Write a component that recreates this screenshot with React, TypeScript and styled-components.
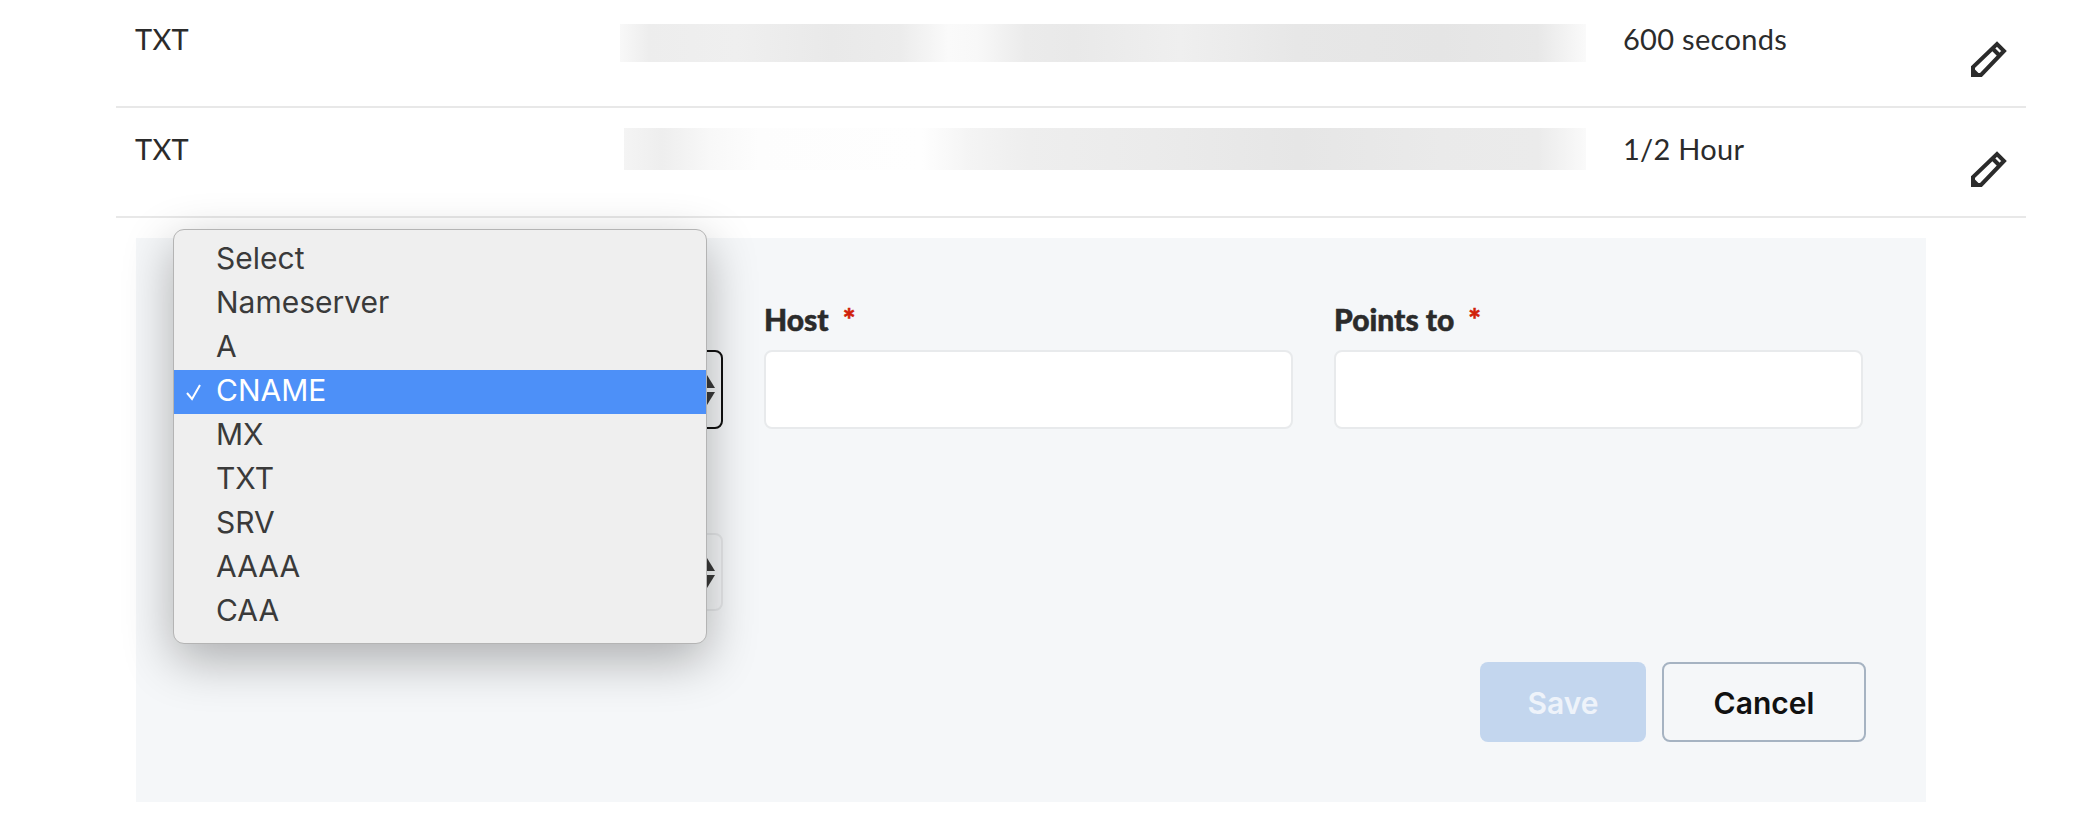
import React from "react";
import styled, {createGlobalStyle} from "styled-components";

const GlobalStyle = createGlobalStyle`
    html, body {
        margin: 0;
        background: #fff;
    }
    body {
        font-family: Lato, "Noto Sans", sans-serif;
        color: #2b2b2b;
    }
`;

const Page = styled.div`
    position: relative;
    width: 2094px;
    height: 830px;
    overflow: hidden;
`;

const RecordList = styled.div`
    margin: 0 68px 0 116px;
`;

const RecordRow = styled.div<{nudge: number}>`
    display: grid;
    grid-template-columns: 485px 966px 360px 1fr;
    box-sizing: border-box;
    height: ${({nudge}) => nudge ? 110 : 108}px;
    padding-left: 19px;
    border-bottom: 2px solid #e8e8e8;
    font-size: 29px;
    letter-spacing: 0.3px;
    line-height: 34px;
    --nudge: ${({nudge}) => nudge}px;
`;

const Cell = styled.div`
    padding-top: calc(22px + var(--nudge));
`;

const TtlCell = styled(Cell)`
    padding-left: 37px;
`;

const BlurClip = styled.div<{top: number; left: number; height: number}>`
    margin-top: ${({top}) => top}px;
    margin-left: ${({left}) => left}px;
    height: ${({height}) => height}px;
    overflow: hidden;
    background: #fafafa;
`;

const BlurStrip = styled.div<{stops: string}>`
    height: 100%;
    background: linear-gradient(90deg, ${({stops}) => stops});
`;

const EditCell = styled.div`
    padding: calc(40px + var(--nudge)) 0 0 24px;
    color: #2b2b2b;
`;

const Panel = styled.div`
    margin: 20px 0 0 136px;
    width: 1790px;
    height: 564px;
    box-sizing: border-box;
    padding: 65px 60px 0 58px;
    background: #f5f7f9;
`;

const FieldGrid = styled.div`
    display: grid;
    grid-template-columns: repeat(3, 529px);
    column-gap: 41px;
`;

const Field = styled.div``;

const Label = styled.div`
    height: 47px;
    font-size: 30px;
    font-weight: 900;
    line-height: 32px;
    color: #2b2b2b;
    -webkit-text-stroke: 0.5px #2b2b2b;
`;

const Star = styled.span`
    margin-left: 14px;
    color: #d0200a;
    -webkit-text-stroke: 0.5px #d0200a;
`;

const TextBox = styled.div`
    height: 79px;
    box-sizing: border-box;
    background: #fff;
    border: 2px solid #e8eaec;
    border-radius: 8px;
`;

const SelectBox = styled.div<{focused?: boolean}>`
    position: relative;
    width: 529px;
    height: ${({focused}) => focused ? 79 : 78}px;
    box-sizing: border-box;
    border: 2px solid ${({focused}) => focused ? "#111" : "#e6e8ea"};
    border-radius: 8px;
    background: #f5f7f9;
`;

const SelectArrows = styled.svg`
    position: absolute;
    right: 6px;
    top: 23px;
`;

const SecondSelect = styled.div`
    margin-top: 104px;
`;

const Actions = styled.div`
    display: flex;
    justify-content: flex-end;
    gap: 16px;
    margin-top: 51px;
`;

const Button = styled.button<{primary?: boolean}>`
    height: 80px;
    width: ${({primary}) => primary ? 166 : 204}px;
    box-sizing: border-box;
    border-radius: 8px;
    border: ${({primary}) => primary ? "none" : "2px solid #a6b3c2"};
    background: ${({primary}) => primary ? "#c3d6ee" : "#f5f7f9"};
    color: ${({primary}) => primary ? "#eef3fa" : "#111"};
    font-family: Inter, sans-serif;
    font-size: 30px;
    font-weight: 600;
    padding: 2px 0 0;
`;

const Dropdown = styled.div`
    position: absolute;
    left: 173px;
    top: 229px;
    width: 534px;
    height: 415px;
    box-sizing: border-box;
    padding: 8px 0;
    background: #efefef;
    border: 1px solid #b4b4b4;
    border-radius: 11px;
    box-shadow: 0 16px 50px rgba(0, 0, 0, 0.3);
    font-family: Inter, sans-serif;
    font-size: 30px;
    overflow: hidden;
`;

const Option = styled.div<{selected?: boolean}>`
    position: relative;
    height: 44px;
    line-height: 40px;
    padding-left: 42px;
    color: ${({selected}) => selected ? "#fff" : "#3a3a3a"};
    background: ${({selected}) => selected ? "#4d90f8" : "transparent"};
`;

const Check = styled.svg`
    position: absolute;
    left: 11px;
    top: 13px;
`;

const Pencil = () => (
    <svg width="38" height="38" viewBox="0 0 38 38" fill="none" stroke="currentColor" strokeWidth="4">
        <path d="M3 35V27L27 4L34 11L11 35Z" strokeLinejoin="miter"/>
        <path d="M22.5 8.5L29.5 15.5"/>
        <path d="M3 35L3 29L9 35Z" fill="currentColor" strokeWidth="2"/>
    </svg>
);

const Arrows = () => (
    <SelectArrows width="16" height="30" viewBox="0 0 16 30" fill="#3a3a3a">
        <path d="M8 0L16 13H0Z"/>
        <path d="M0 17H16L8 30Z"/>
    </SelectArrows>
);

const records = [
    {
        type: "TXT", ttl: "600 seconds", nudge: 0, top: 24, left: 0, blurHeight: 38,
        stops: "#f8f8f8 0%, #ededed 3%, #efefef 12%, #e9e9e9 22%, #ececec 29%, #fafafa 34%, #f8f8f8 37%, #ebebeb 42%, #e9e9e9 47%, #efefef 58%, #e7e7e7 70%, #e5e5e5 85%, #e8e8e8 95%, #fafafa 100%",
    },
    {
        type: "TXT", ttl: "1/2 Hour", nudge: 2, top: 20, left: 4, blurHeight: 42,
        stops: "#f4f4f4 0%, #eeeeee 4%, #f8f8f8 9%, #fdfdfd 14%, #fefefe 31%, #f4f4f4 36%, #eeeeee 42%, #ebebeb 55%, #e6e6e6 70%, #eaeaea 85%, #ebebeb 95%, #fafafa 100%",
    },
];

const options = ["Select", "Nameserver", "A", "CNAME", "MX", "TXT", "SRV", "AAAA", "CAA"];

const App = () => (
    <Page>
        <GlobalStyle/>
        <RecordList>
            {records.map((record, index) => (
                <RecordRow key={index} nudge={record.nudge}>
                    <Cell>{record.type}</Cell>
                    <div>
                        <BlurClip top={record.top} left={record.left} height={record.blurHeight}>
                            <BlurStrip stops={record.stops}/>
                        </BlurClip>
                    </div>
                    <TtlCell>{record.ttl}</TtlCell>
                    <EditCell><Pencil/></EditCell>
                </RecordRow>
            ))}
        </RecordList>
        <Panel>
            <FieldGrid>
                <Field>
                    <Label/>
                    <SelectBox focused><Arrows/></SelectBox>
                    <SecondSelect>
                        <SelectBox><Arrows/></SelectBox>
                    </SecondSelect>
                </Field>
                <Field>
                    <Label>Host<Star>*</Star></Label>
                    <TextBox/>
                </Field>
                <Field>
                    <Label>Points to<Star>*</Star></Label>
                    <TextBox/>
                </Field>
            </FieldGrid>
            <Actions>
                <Button primary>Save</Button>
                <Button>Cancel</Button>
            </Actions>
        </Panel>
        <Dropdown>
            {options.map(option => (
                <Option key={option} selected={option === "CNAME"}>
                    {option === "CNAME" && (
                        <Check width="18" height="18" viewBox="0 0 18 18" fill="none" stroke="#fff" strokeWidth="2">
                            <path d="M2 10L7 16L15 2"/>
                        </Check>
                    )}
                    {option}
                </Option>
            ))}
        </Dropdown>
    </Page>
);

export default App;
